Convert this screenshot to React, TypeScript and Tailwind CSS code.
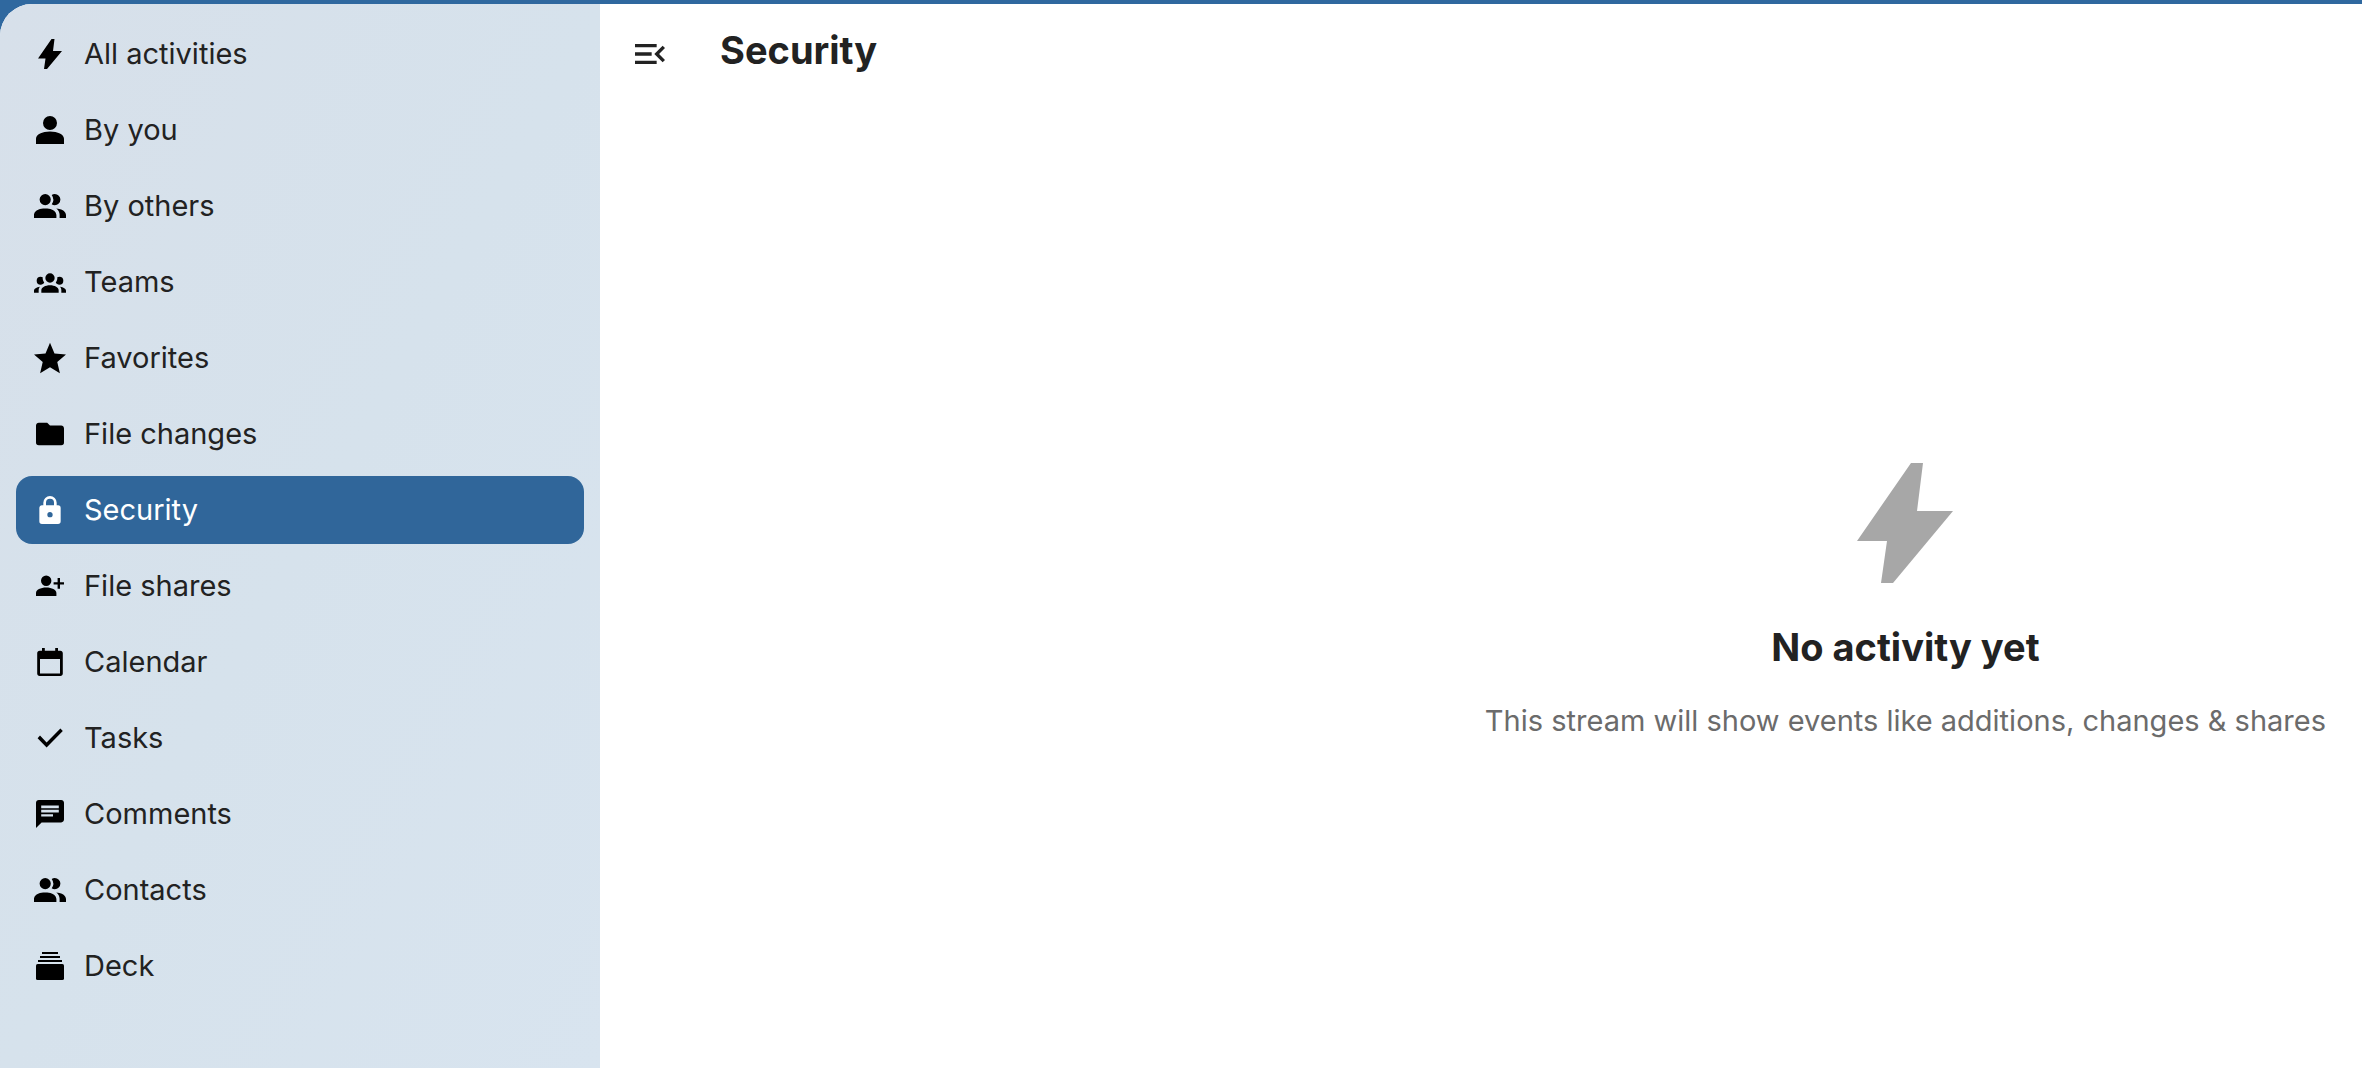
import type { ReactNode } from 'react';
import clsx from 'clsx';

interface Filter {
  id: string;
  label: string;
  viewBox?: string;
  icon: ReactNode;
}

const peopleIcon = (
  <path d="M16 17V19H2V17S2 13 9 13 16 17 16 17M12.5 7.5A3.5 3.5 0 1 0 9 11A3.5 3.5 0 0 0 12.5 7.5M15.94 13A5.32 5.32 0 0 1 18 17V19H22V17S22 13.37 15.94 13M15 4A3.39 3.39 0 0 0 13.07 4.59A5 5 0 0 1 13.07 10.41A3.39 3.39 0 0 0 15 11A3.5 3.5 0 0 0 15 4Z" />
);

const boltIcon = <path d="M8.75.5h1.5l-.75 6H14l-7.5 9H5l.75-5.25H2z" />;

const filters: Filter[] = [
  { id: 'all', label: 'All activities', icon: boltIcon },
  {
    id: 'self',
    label: 'By you',
    icon: <path d="M8 1a3.5 3.5 0 1 1 0 7 3.5 3.5 0 0 1 0-7zm0 7.8c3.9 0 7 1.5 7 3.6V15H1v-2.6c0-2.1 3.1-3.6 7-3.6z" />,
  },
  { id: 'by', label: 'By others', viewBox: '2 1.5 20 20', icon: peopleIcon },
  {
    id: 'circles',
    label: 'Teams',
    viewBox: '0 0 24 24',
    icon: (
      <path d="M12,5.5A3.5,3.5 0 0,1 15.5,9A3.5,3.5 0 0,1 12,12.5A3.5,3.5 0 0,1 8.5,9A3.5,3.5 0 0,1 12,5.5M5,8C5.56,8 6.08,8.15 6.53,8.42C6.38,9.85 6.8,11.27 7.66,12.38C7.16,13.34 6.16,14 5,14A3,3 0 0,1 2,11A3,3 0 0,1 5,8M19,8A3,3 0 0,1 22,11A3,3 0 0,1 19,14C17.84,14 16.84,13.34 16.34,12.38C17.2,11.27 17.62,9.85 17.47,8.42C17.92,8.15 18.44,8 19,8M5.5,18.25C5.5,16.18 8.41,14.5 12,14.5C15.59,14.5 18.5,16.18 18.5,18.25V20H5.5V18.25M0,20V18.5C0,17.11 1.89,15.94 4.45,15.6C3.86,16.28 3.5,17.22 3.5,18.25V20H0M24,20H20.5V18.25C20.5,17.22 20.14,16.28 19.55,15.6C22.11,15.94 24,17.11 24,18.5V20Z" />
    ),
  },
  {
    id: 'favorites',
    label: 'Favorites',
    viewBox: '2 1.5 20 20',
    icon: <path d="M12,17.27L18.18,21L16.54,13.97L22,9.24L14.81,8.62L12,2L9.19,8.62L2,9.24L7.45,13.97L5.82,21L12,17.27Z" />,
  },
  {
    id: 'files',
    label: 'File changes',
    viewBox: '0.57 0.57 22.86 22.86',
    icon: <path d="M10,4H4C2.89,4 2,4.89 2,6V18A2,2 0 0,0 4,20H20A2,2 0 0,0 22,18V8C22,6.89 21.1,6 20,6H12L10,4Z" />,
  },
  {
    id: 'security',
    label: 'Security',
    viewBox: '0 -0.5 24 24',
    icon: (
      <path d="M12,17A2,2 0 0,0 14,15C14,13.89 13.1,13 12,13A2,2 0 0,0 10,15A2,2 0 0,0 12,17M18,8A2,2 0 0,1 20,10V20A2,2 0 0,1 18,22H6A2,2 0 0,1 4,20V10C4,8.89 4.9,8 6,8H7V6A5,5 0 0,1 12,1A5,5 0 0,1 17,6V8H18M12,3A3,3 0 0,0 9,6V8H15V6A3,3 0 0,0 12,3Z" />
    ),
  },
  {
    id: 'shares',
    label: 'File shares',
    icon: (
      <path d="M6.1 2.8a2.6 2.6 0 1 1 0 5.2 2.6 2.6 0 0 1 0-5.2zm0 6c2.8 0 5.1 1.2 5.1 2.7V13H1v-1.5c0-1.5 2.3-2.7 5.1-2.7zM11.8 4H13v2.100h2v1.200h-2v2.100h-1.200V7.300h-2V6.100h2z" />
    ),
  },
  {
    id: 'calendar',
    label: 'Calendar',
    icon: (
      <path
        fillRule="evenodd"
        d="M4 1h1.4v1.4h5.2V1H12v1.4h1.2c.7 0 1.200.5 1.200 1.200v10.200c0 .7-.5 1.200-1.200 1.200H2.800c-.7 0-1.200-.5-1.200-1.200V3.600c0-.7.5-1.200 1.200-1.200H4zM3 6.500v7.200h10V6.500z"
      />
    ),
  },
  { id: 'tasks', label: 'Tasks', icon: <path d="M13.2 3.3l1.2 1.2-8.1 8.2-4.5-4.6L3 6.8l3.3 3.4z" /> },
  {
    id: 'comments',
    label: 'Comments',
    icon: (
      <path
        fillRule="evenodd"
        d="M2.4 1h11.2c.8 0 1.4.6 1.4 1.4v8.4c0 .8-.6 1.4-1.4 1.4H3.8L1 15V2.4C1 1.6 1.6 1 2.4 1zM3.6 3.800v1.300h8.800V3.800zm0 2.100v1.300h8.800V5.900zm0 2.200v1.200h5.900V8.100z"
      />
    ),
  },
  { id: 'contacts', label: 'Contacts', viewBox: '2 1.5 20 20', icon: peopleIcon },
  {
    id: 'deck',
    label: 'Deck',
    icon: (
      <>
        <path d="M4 1h8v1H4zM3 3h10v1H3zM2 5h12v1H2z" />
        <rect x="1" y="7" width="14" height="8" rx="0.8" />
      </>
    ),
  },
];

function Icon({ viewBox = '0 0 16 16', className, children }: { viewBox?: string; className?: string; children: ReactNode }) {
  return (
    <svg viewBox={viewBox} className={clsx('shrink-0 fill-current', className)} aria-hidden="true">
      {children}
    </svg>
  );
}

function Navigation({ active }: { active: string }) {
  return (
    <nav
      aria-label="Activities"
      className="w-[600px] shrink-0 bg-linear-to-br from-[#d7e0ea] via-[#d6e2ec] to-[#d8e4ef] p-4"
    >
      <ul className="flex flex-col gap-2">
        {filters.map((filter) => {
          const isActive = filter.id === active;
          return (
            <li key={filter.id}>
              <a
                href={`#${filter.id}`}
                aria-current={isActive ? 'page' : undefined}
                className={clsx(
                  'flex h-[68px] items-center gap-[18px] rounded-2xl px-[18px]',
                  isActive ? 'bg-[#30669a] text-white' : 'text-[#222222]'
                )}
              >
                <Icon viewBox={filter.viewBox} className={clsx('size-8', !isActive && 'text-black')}>
                  {filter.icon}
                </Icon>
                <span className="text-[29px]">{filter.label}</span>
              </a>
            </li>
          );
        })}
      </ul>
    </nav>
  );
}

function EmptyContent() {
  return (
    <div className="flex flex-1 flex-col items-end justify-center pr-9">
      <div className="flex flex-col items-center text-center">
        <Icon className="size-32 text-[#a7a7a7]">{boltIcon}</Icon>
        <h2 className="mt-9 text-[38px] leading-[48px] font-bold">No activity yet</h2>
        <p className="mt-7 text-[29px] leading-[44px] text-[#6b6b6b]">
          This stream will show events like additions, changes &amp; shares
        </p>
      </div>
    </div>
  );
}

export default function App() {
  return (
    <div className="min-h-screen bg-[#2f689f] pt-1 font-[Inter,'Liberation_Sans',sans-serif] text-[#222222]">
      <div className="flex min-h-[calc(100vh-4px)] overflow-hidden rounded-tl-[32px] bg-white">
        <Navigation active="security" />
        <main className="flex flex-1 flex-col">
          <header className="flex h-[130px] items-start gap-9 pt-4 pl-4">
            <button type="button" aria-label="Close navigation" className="flex size-[68px] items-center justify-center">
              <Icon viewBox="0 0 24 24" className="size-10">
                <path d="M21,15.61L19.59,17L14.58,12L19.59,7L21,8.39L17.44,12L21,15.61M3,6H16V8H3V6M3,13V11H13V13H3M3,18V16H16V18H3Z" />
              </Icon>
            </button>
            <h1 className="pt-1.5 text-[38px] leading-[48px] font-bold">Security</h1>
          </header>
          <EmptyContent />
        </main>
      </div>
    </div>
  );
}
